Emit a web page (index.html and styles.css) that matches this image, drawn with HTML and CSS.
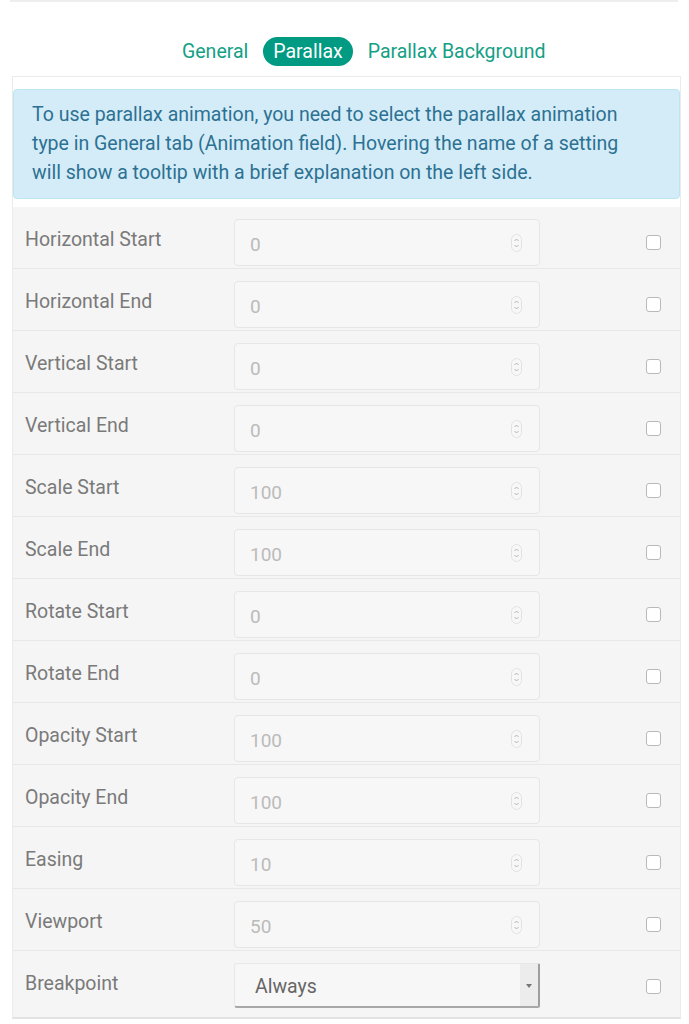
FILE: index.html
```html
<!DOCTYPE html>
<html lang="en">
<head>
    <meta charset="UTF-8">
    <meta name="viewport" content="width=device-width, initial-scale=1.0">
    <title>Parallax settings</title>
    <link rel="stylesheet" href="styles.css">
</head>
<body>
    <div class="top-line"></div>

    <nav class="tabs">
        <a href="#">General</a>
        <a href="#" class="active">Parallax</a>
        <a href="#">Parallax Background</a>
    </nav>

    <div class="panel">
        <div class="alert-info">
            To use parallax animation, you need to select the parallax animation type in General tab (Animation field). Hovering the name of a setting will show a tooltip with a brief explanation on the left side.
        </div>

        <div class="settings" id="settings"></div>
    </div>

    <script>
        const rows = [
            ['Horizontal Start', '0'],
            ['Horizontal End', '0'],
            ['Vertical Start', '0'],
            ['Vertical End', '0'],
            ['Scale Start', '100'],
            ['Scale End', '100'],
            ['Rotate Start', '0'],
            ['Rotate End', '0'],
            ['Opacity Start', '100'],
            ['Opacity End', '100'],
            ['Easing', '10'],
            ['Viewport', '50']
        ];

        const spinner = `
            <svg class="spin" width="11" height="18" viewBox="0 0 11 18">
                <rect x="0.5" y="0.5" width="10" height="17" rx="5" fill="none" stroke="#e2e2e2"/>
                <path d="M3.5 7 L5.5 5 L7.5 7" fill="none" stroke="#b5b5b5" stroke-width="1"/>
                <path d="M3.5 11 L5.5 13 L7.5 11" fill="none" stroke="#b5b5b5" stroke-width="1"/>
            </svg>`;

        const settings = document.getElementById('settings');
        let html = '';
        rows.forEach(function(row) {
            html += `
                <div class="setting-row">
                    <label>${row[0]}</label>
                    <div class="num-input"><span>${row[1]}</span>${spinner}</div>
                    <div class="check-cell"><span class="checkbox"></span></div>
                </div>`;
        });
        html += `
            <div class="setting-row">
                <label>Breakpoint</label>
                <div class="select-box">
                    <span>Always</span>
                    <span class="select-arrow"></span>
                </div>
                <div class="check-cell"><span class="checkbox"></span></div>
            </div>`;
        settings.innerHTML = html;
    </script>
</body>
</html>
```

FILE: styles.css
```css
body {
    font-family: Roboto, 'Liberation Sans', sans-serif;
    margin: 0;
    background: #ffffff;
}

.top-line {
    height: 2px;
    margin: 0 11px 0 10px;
    background: #eeeeee;
}

.tabs {
    display: flex;
    align-items: center;
    gap: 5px;
    padding: 35px 0 0 172px;
    height: 29px;
}

.tabs a {
    color: #14a085;
    text-decoration: none;
    font-size: 19.5px;
    padding: 0 10px;
    line-height: 29px;
    border-radius: 15px;
}

.tabs a.active {
    background: #009b82;
    color: #ffffff;
}

.panel {
    margin: 10px 8px 0 12px;
    border: 1px solid #ebebeb;
    border-bottom: 2px solid #e2e2e2;
    padding-top: 12px;
}

.alert-info {
    background: #d4ecf7;
    border: 1px solid #bde5f2;
    border-radius: 4px;
    color: #2c7193;
    font-size: 19.5px;
    line-height: 29px;
    padding: 10px 40px 11px 18px;
}

.settings {
    margin-top: 8px;
}

.setting-row {
    display: grid;
    grid-template-columns: 209px 306px 1fr;
    padding: 12px 0 0 12px;
    height: 49px;
    background: #f5f5f5;
    border-bottom: 1px solid #e8e8e8;
}

.setting-row:last-child {
    border-bottom: none;
    height: 54px;
}

.setting-row label {
    color: #7a7a7a;
    font-size: 19.5px;
    line-height: 24px;
    padding-top: 9px;
}

.num-input {
    box-sizing: border-box;
    height: 47px;
    border: 1px solid #e6e6e6;
    border-radius: 4px;
    background: #f7f7f7;
    display: flex;
    align-items: center;
    justify-content: space-between;
    padding: 3px 17px 0 15px;
    color: #bbbbbb;
    font-size: 19px;
}

.spin {
    margin-top: -3px;
}

.select-box {
    box-sizing: border-box;
    height: 45px;
    border: 1px solid #e8e8e8;
    border-right: 2px solid #9e9e9e;
    border-bottom: 2px solid #a8a8a8;
    border-radius: 3px 2px 2px 3px;
    background: linear-gradient(to right, #f7f7f7 calc(100% - 18px), #ececec calc(100% - 18px));
    display: flex;
    align-items: center;
    justify-content: space-between;
    padding: 3px 6px 0 20px;
    color: #666666;
    font-size: 19.5px;
}

.select-arrow {
    width: 0;
    height: 0;
    border-left: 3px solid transparent;
    border-right: 3px solid transparent;
    border-top: 4px solid #777777;
    margin-top: -2px;
}

.check-cell {
    display: flex;
    justify-content: flex-end;
    padding: 16px 19px 0 0;
}

.checkbox {
    box-sizing: border-box;
    width: 15px;
    height: 15px;
    border: 1px solid #b9b9b9;
    border-radius: 3px;
    background: #ffffff;
}
```
